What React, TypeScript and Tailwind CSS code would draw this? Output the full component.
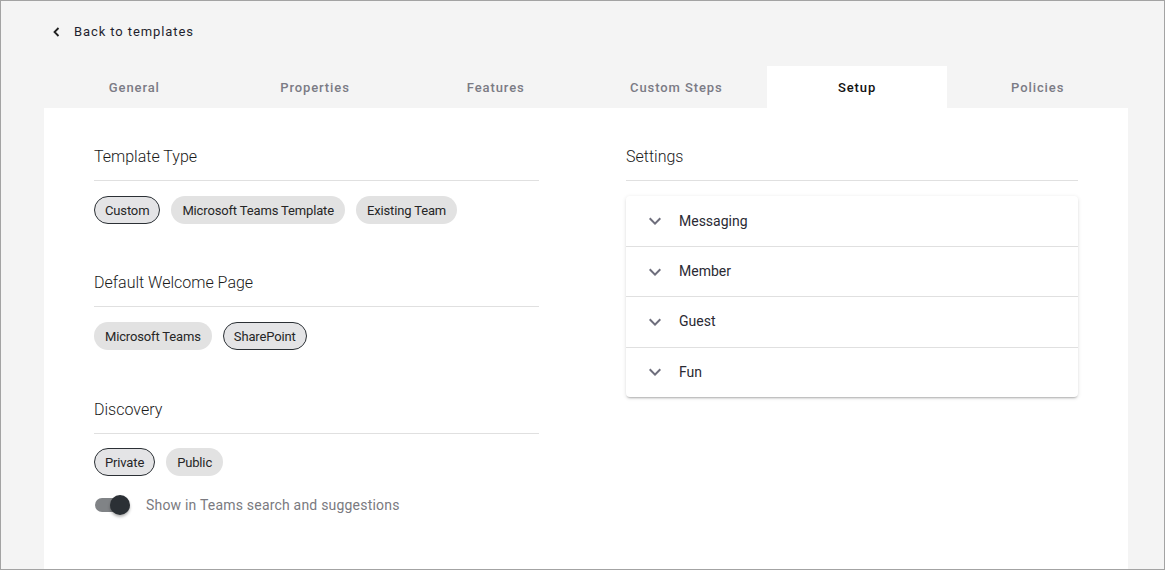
import { useState } from 'react';

const tabs = ['General', 'Properties', 'Features', 'Custom Steps', 'Setup', 'Policies'];

type ChipGroupProps = {
  options: string[];
  selected: string;
};

const ChipGroup = ({ options, selected }: ChipGroupProps) => (
  <div className="flex gap-[11px] mt-[15px]">
    {options.map((opt) => (
      <button
        key={opt}
        className={`h-[28px] px-[10px] rounded-full text-[13px] tracking-[-0.15px] text-[#262626] leading-none ${
          opt === selected
            ? 'bg-[#e4e4e6] border border-[#2b3035]'
            : 'bg-[#e2e2e2] border border-transparent'
        }`}
      >
        {opt}
      </button>
    ))}
  </div>
);

const SectionTitle = ({ children }: { children: string }) => (
  <div className="border-b border-[#e0e0e0] pb-[11px] pt-[2px]">
    <h3 className="text-[16px] leading-[24px] font-light text-[#1a1a1a]">{children}</h3>
  </div>
);

const ChevronDown = () => (
  <svg className="h-6 w-6 text-[#6e6e7c]" viewBox="0 0 24 24" fill="currentColor">
    <path d="M16.59 8.59 12 13.17 7.41 8.59 6 10l6 6 6-6z" />
  </svg>
);

const settings = ['Messaging', 'Member', 'Guest', 'Fun'];

export default function App() {
  const [activeTab] = useState('Setup');
  const [showInSearch, setShowInSearch] = useState(true);

  return (
    <div className="h-[570px] bg-[#f4f4f4] border border-[#a3a3a3] font-['Roboto',sans-serif] flex flex-col overflow-hidden">
      {/* Back link */}
      <div className="flex items-center pl-[50px] pt-[21px] h-[40px]">
        <svg className="h-[12px] w-[12px] text-[#1f1f1f]" viewBox="0 0 12 12" fill="none">
          <path d="M7.5 2 3.5 6l4 4" stroke="currentColor" strokeWidth="1.8" />
        </svg>
        <span className="ml-[11px] text-[13px] tracking-[0.9px] text-[#1f1f2e]">Back to templates</span>
      </div>

      {/* Tabs */}
      <div className="ml-[43px] w-[1084px] mt-[25px] grid grid-cols-6 h-[42px]">
        {tabs.map((t) => (
          <div
            key={t}
            className={`flex items-center justify-center pt-[1px] text-[13px] font-medium tracking-[0.9px] ${
              t === activeTab ? 'bg-white text-[#111]' : 'text-[#7b7b85]'
            }`}
          >
            {t}
          </div>
        ))}
      </div>

      {/* Panel */}
      <div className="ml-[43px] w-[1084px] flex-1 bg-white px-[50px] pt-[35px] flex gap-[87px]">
        <div className="w-[445px]">
          <SectionTitle>Template Type</SectionTitle>
          <ChipGroup options={['Custom', 'Microsoft Teams Template', 'Existing Team']} selected="Custom" />

          <div className="mt-[45px]">
            <SectionTitle>Default Welcome Page</SectionTitle>
          </div>
          <ChipGroup options={['Microsoft Teams', 'SharePoint']} selected="SharePoint" />

          <div className="mt-[46px]">
            <SectionTitle>Discovery</SectionTitle>
          </div>
          <div className="-mt-[1px]">
            <ChipGroup options={['Private', 'Public']} selected="Private" />
          </div>

          <div className="flex items-center mt-[19px] h-[20px]">
            <button
              onClick={() => setShowInSearch(!showInSearch)}
              className="relative w-[36px] h-[20px] ml-[1px] flex items-center"
            >
              <span className="w-[34px] h-[14px] rounded-full bg-[#2b3035]/60" />
              <span
                className={`absolute top-0 h-[20px] w-[20px] rounded-full bg-[#2b3035] shadow-[0_2px_3px_rgba(0,0,0,0.3)] ${
                  showInSearch ? 'left-[15px]' : 'left-0'
                }`}
              />
            </button>
            <span className="ml-[15px] text-[14px] tracking-[0.2px] text-[#7a7a80]">
              Show in Teams search and suggestions
            </span>
          </div>
        </div>

        <div className="w-[452px]">
          <SectionTitle>Settings</SectionTitle>
          <div className="mt-[15px] rounded-[4px] shadow-[0_2px_2px_-1px_rgba(0,0,0,0.25),0_1px_4px_0_rgba(0,0,0,0.12)] bg-white">
            {settings.map((s, i) => (
              <div
                key={s}
                className={`flex items-center pl-[17px] ${
                  i > 0 ? 'border-t border-[#e0e0e0] h-[50.34px]' : 'h-[50px]'
                }`}
              >
                <ChevronDown />
                <span className="ml-[12px] text-[14px] text-[#2a2a33]">{s}</span>
              </div>
            ))}
          </div>
        </div>
      </div>
    </div>
  );
}
